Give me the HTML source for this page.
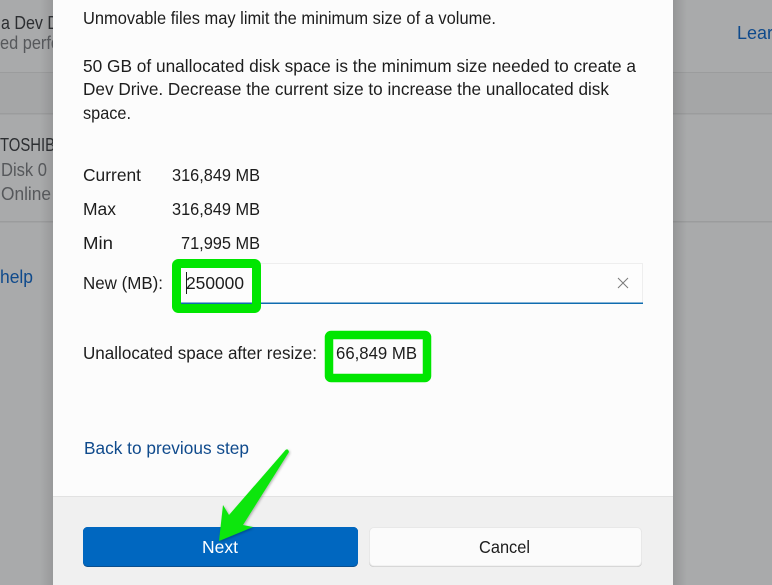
<!DOCTYPE html>
<html><head><meta charset="utf-8"><style>
html,body{margin:0;padding:0;width:772px;height:585px;overflow:hidden;background:#a9aaab}
svg{display:block}
text{font-family:"Liberation Sans",sans-serif;font-size:17.5px;fill:#1d1d1d}
.b{fill:#2c2e31;font-size:18px}
.g{fill:#56585b;font-size:18px}
.l{fill:#0f4a8c;font-size:18px}
</style></head><body>
<svg width="772" height="585" viewBox="0 0 772 585" xmlns="http://www.w3.org/2000/svg">
<defs>
<linearGradient id="sl" x1="0" x2="1" y1="0" y2="0"><stop offset="0" stop-color="#000" stop-opacity="0"/><stop offset="1" stop-color="#000" stop-opacity=".1"/></linearGradient>
<linearGradient id="sr" x1="0" x2="1" y1="0" y2="0"><stop offset="0" stop-color="#000" stop-opacity=".12"/><stop offset="1" stop-color="#000" stop-opacity="0"/></linearGradient>
<filter id="ds" x="-20%" y="-20%" width="140%" height="140%"><feDropShadow dx="1" dy="1" stdDeviation="1.2" flood-color="#000" flood-opacity=".3"/></filter>
</defs>
<rect width="772" height="585" fill="#a9aaab"/>
<rect x="0" y="72" width="772" height="41" fill="#a5a6a7"/>
<rect x="0" y="72" width="772" height="1" fill="#9b9c9d"/>
<rect x="0" y="113" width="772" height="1.5" fill="#9b9c9d"/>
<rect x="0" y="221" width="772" height="1.5" fill="#9b9c9d"/>
<rect x="40" y="0" width="13" height="585" fill="url(#sl)"/>
<rect x="673" y="0" width="14" height="585" fill="url(#sr)"/>
<text class="b" x="1" y="29" textLength="58" lengthAdjust="spacingAndGlyphs">a Dev D</text>
<text class="g" x="0" y="49" textLength="60" lengthAdjust="spacingAndGlyphs">ed perfo</text>
<text class="b" x="0" y="151" textLength="65" lengthAdjust="spacingAndGlyphs">TOSHIBA</text>
<text class="g" x="1" y="176" textLength="46" lengthAdjust="spacingAndGlyphs">Disk 0</text>
<text class="g" x="1" y="200" textLength="50" lengthAdjust="spacingAndGlyphs">Online</text>
<text class="l" x="0" y="283" textLength="33" lengthAdjust="spacingAndGlyphs">help</text>
<text class="l" x="737" y="39" textLength="46" lengthAdjust="spacingAndGlyphs">Learn</text>

<rect x="53" y="0" width="620" height="585" fill="#fcfcfc"/>
<rect x="53" y="496" width="620" height="89" fill="#f0f0f0"/>
<rect x="53" y="496" width="620" height="1" fill="#e2e2e2"/>

<text x="83" y="24" textLength="413" lengthAdjust="spacingAndGlyphs">Unmovable files may limit the minimum size of a volume.</text>
<text x="83" y="72" textLength="553" lengthAdjust="spacingAndGlyphs">50 GB of unallocated disk space is the minimum size needed to create a</text>
<text x="83" y="95" textLength="526" lengthAdjust="spacingAndGlyphs">Dev Drive. Decrease the current size to increase the unallocated disk</text>
<text x="83" y="119" textLength="48" lengthAdjust="spacingAndGlyphs">space.</text>
<text x="83" y="181" textLength="58" lengthAdjust="spacingAndGlyphs">Current</text>
<text x="172" y="181" textLength="88" lengthAdjust="spacingAndGlyphs">316,849 MB</text>
<text x="83" y="215" textLength="33" lengthAdjust="spacingAndGlyphs">Max</text>
<text x="172" y="215" textLength="88" lengthAdjust="spacingAndGlyphs">316,849 MB</text>
<text x="83" y="249" textLength="30" lengthAdjust="spacingAndGlyphs">Min</text>
<text x="181" y="249" textLength="79" lengthAdjust="spacingAndGlyphs">71,995 MB</text>
<text x="83" y="289" textLength="80" lengthAdjust="spacingAndGlyphs">New (MB):</text>

<rect x="172.500" y="263.500" width="470" height="40" fill="#fdfdfd" stroke="#eeeeee"/>
<rect x="172" y="302.500" width="471" height="1.500" fill="#0f6cb0"/>
<path d="M618 278L628 288M628 278L618 288" stroke="#7a7a7a" stroke-width="1" fill="none"/>

<rect x="176.500" y="263.500" width="80" height="45" rx="2" fill="none" stroke="#00e600" stroke-width="9"/>
<text x="186" y="289" textLength="58" lengthAdjust="spacingAndGlyphs">250000</text>
<rect x="186" y="272" width="1" height="22" fill="#1a1a1a"/>

<text x="83" y="359" textLength="234" lengthAdjust="spacingAndGlyphs">Unallocated space after resize:</text>
<rect x="329" y="335" width="98" height="43" rx="2" fill="#fcfcfc" stroke="#00e600" stroke-width="8.500"/>
<text x="336" y="359" textLength="81" lengthAdjust="spacingAndGlyphs">66,849 MB</text>

<text x="84" y="454" textLength="165" lengthAdjust="spacingAndGlyphs" style="fill:#0f4a8c">Back to previous step</text>

<rect x="83" y="527" width="275" height="40" rx="4.500" fill="#0a4f8f"/>
<rect x="83" y="527" width="275" height="39" rx="4.500" fill="#0067c0"/>
<text x="202" y="553" textLength="36" lengthAdjust="spacingAndGlyphs" style="fill:#fff">Next</text>
<rect x="369" y="528" width="273" height="39" rx="4.500" fill="#c6c6c6"/>
<rect x="369.500" y="527.500" width="272" height="38.500" rx="4.500" fill="#fbfbfb" stroke="#e8e8e8"/>
<text x="479" y="553" textLength="51" lengthAdjust="spacingAndGlyphs">Cancel</text>

<path d="M219 541L223 505L229 515L285.500 450Q288 448 289 452L243 525L253 527Z" fill="#0be60b" filter="url(#ds)"/>
</svg>
</body></html>
